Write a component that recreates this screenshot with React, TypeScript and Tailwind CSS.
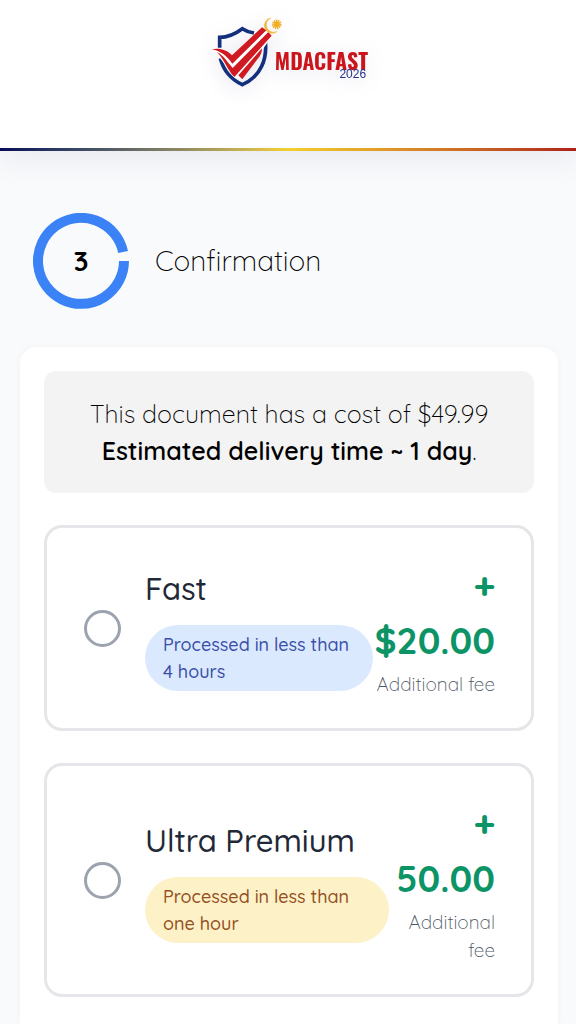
import React from "react";

type Option = {
  id: string;
  title: string;
  note: string;
  price: string;
  pill: string;
  priceColumn: string;
};

const options: Option[] = [
  {
    id: "fast",
    title: "Fast",
    note: "Processed in less than 4 hours",
    price: "$20.00",
    pill: "bg-[#dbe9fe] text-[#3a4fa8]",
    priceColumn: "w-[122px]",
  },
  {
    id: "ultra",
    title: "Ultra Premium",
    note: "Processed in less than one hour",
    price: "50.00",
    pill: "bg-[#fdf1c7] text-[#94501f]",
    priceColumn: "w-[106px]",
  },
];

function Shield() {
  return (
    <svg viewBox="0 0 240 240" className="size-20 shrink-0" aria-hidden="true">
      <g fill="none" stroke="#12307c" strokeWidth="11">
        <path d="M35 101V70Q68 70 103 44Q118 54 138 57" />
        <path d="M171 74C180 135 158 188 103 212C65 194 46 168 37 133" />
      </g>
      <path
        d="M12 106C36 101 57 108 73 123L163 40L192 66L102 196L80 192C56 166 46 138 12 106Z"
        fill="#fff"
      />
      <g fill="#cf1a22">
        <path d="M11 106C35 101 57 108 72 124L162 40L175 49L73 149C56 125 38 111 11 106Z" />
        <path d="M27 114C46 124 57 142 74 162L181 54L191 65L79 189C56 165 50 138 27 114Z" />
        <path d="M162 103C162 113 159 121 155 127L103 196L91 184Z" />
      </g>
      <path d="M188 12A23 23 0 1 0 206 53A21 21 0 0 1 188 12Z" fill="#eeb83a" stroke="#eeb83a" strokeWidth="2" />
      <circle cx="206" cy="31" r="9" fill="#f0ae27" />
      <circle cx="206" cy="31" r="11" fill="none" stroke="#f0ae27" strokeWidth="7" strokeDasharray="4 2" />
    </svg>
  );
}

function Header() {
  return (
    <header className="bg-white shadow-[0_8px_32px_rgba(20,20,70,0.07)]">
      <div className="flex h-[148px] justify-center pt-3.5">
        <a
          href="#home"
          className="flex h-20 items-center drop-shadow-[0_4px_10px_rgba(20,20,110,0.1)]"
        >
          <Shield />
          <span className="relative -ml-[13px] pt-3 font-['Oswald','Roboto_Condensed',sans-serif] text-[22px] leading-6 font-semibold text-[#cb141b]">
            MDAC<span className="font-bold">FAST</span>
            <span className="absolute right-0.5 -bottom-2 font-['Liberation_Sans',sans-serif] text-xs leading-3 font-normal text-[#26318a]">
              2026
            </span>
          </span>
        </a>
      </div>
      <div className="h-[3px] bg-linear-to-r from-[#0c0a58] via-[#f2d02f] to-[#ad1d1b]" />
    </header>
  );
}

function OptionCard({ option }: { option: Option }) {
  return (
    <label
      htmlFor={option.id}
      className="flex items-center rounded-[18px] border-3 border-[#e5e6e9] bg-white py-[30px] pr-9 pl-[37px]"
    >
      <input
        id={option.id}
        type="radio"
        name="speed"
        className="size-[37px] shrink-0 appearance-none rounded-full border-3 border-[#9ca3af] bg-white checked:border-[10px] checked:border-[#3b82f6]"
      />
      <span className="ml-6 flex min-w-0 flex-1 flex-col gap-3.5">
        <span className="text-[31px] leading-[45px] font-medium whitespace-nowrap text-[#1f2937]">
          {option.title}
        </span>
        <span className={`rounded-[33px] px-[18px] py-1.5 text-lg leading-[27px] font-medium ${option.pill}`}>
          {option.note}
        </span>
      </span>
      <span className={`flex shrink-0 flex-col items-end text-right ${option.priceColumn}`}>
        <span className="text-[37px] leading-[55px] font-bold text-[#0d9466]">+</span>
        <span className="text-[37px] leading-[55px] font-bold text-[#0d9466]">{option.price}</span>
        <span className="pt-0.5 text-[19px] leading-7 font-light text-[#4b5563]">Additional fee</span>
      </span>
    </label>
  );
}

export default function App() {
  return (
    <div className="min-h-screen bg-[#f8fafc] font-['Quicksand','Lato',sans-serif] text-black">
      <Header />
      <main className="pt-[62px] pr-[18px] pl-5">
        <div className="flex items-center gap-[26px] pl-[13px]">
          <div className="grid size-24 place-items-center">
            <svg viewBox="0 0 96 96" className="col-start-1 row-start-1 size-24" aria-hidden="true">
              <path
                d="M91 48A43 43 0 1 1 90.1 39.1"
                fill="none"
                stroke="#3b82f6"
                strokeWidth="10"
              />
            </svg>
            <span className="col-start-1 row-start-1 text-[28px] leading-9 font-bold">3</span>
          </div>
          <h1 className="text-[28px] leading-10 font-light">Confirmation</h1>
        </div>
        <section className="mt-[38px] flex flex-col gap-8 rounded-t-2xl bg-white p-6 pb-7 shadow-[0_0_10px_rgba(30,41,59,0.03)]">
          <p className="rounded-xl bg-[#f3f3f3] p-6 text-center text-[25px] leading-[37px] font-light">
            This document has a cost of $49.99
            <br />
            <strong className="font-semibold">Estimated delivery time ~ 1 day</strong>.
          </p>
          {options.map((option) => (
            <OptionCard key={option.id} option={option} />
          ))}
        </section>
      </main>
    </div>
  );
}
